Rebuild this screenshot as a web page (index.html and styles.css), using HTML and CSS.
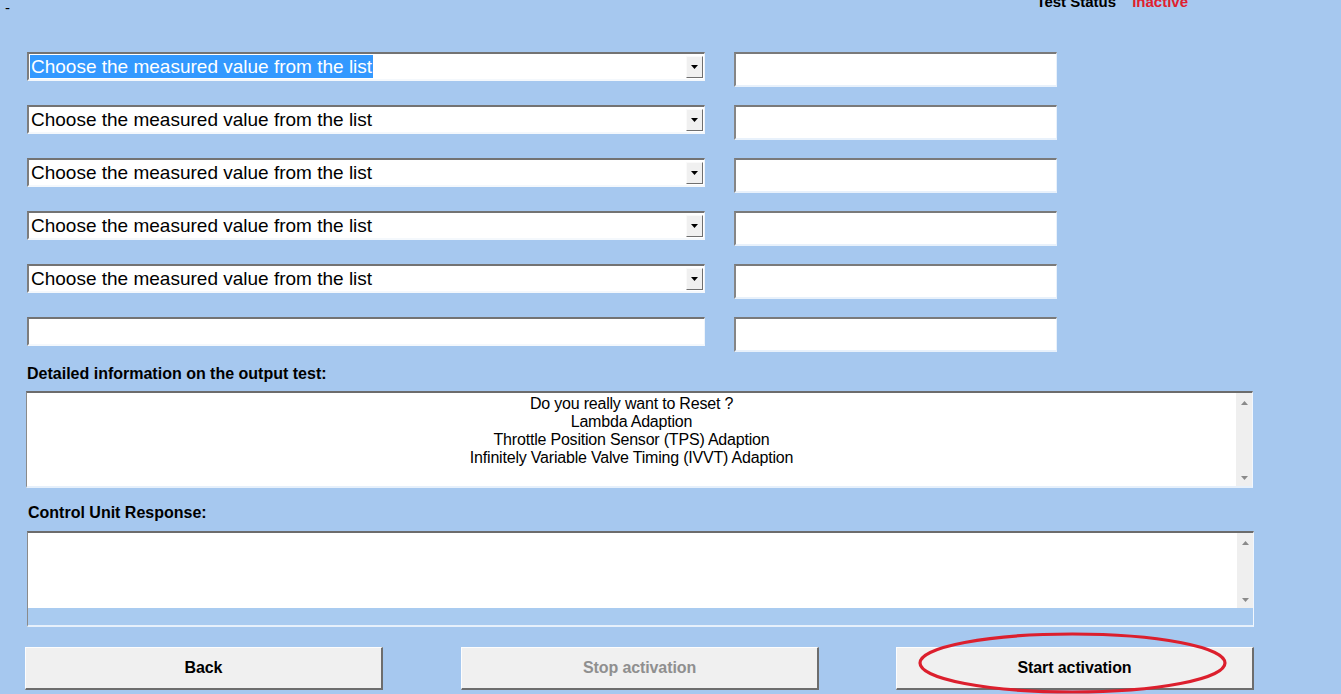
FILE: index.html
```html
<!DOCTYPE html>
<html>
<head>
<meta charset="utf-8">
<link rel="stylesheet" href="styles.css">
</head>
<body>
<div class="topbar">
  <span class="dash">-</span>
  <div class="status"><span class="status-label">Test Status</span><span class="status-value">Inactive</span></div>
</div>

<div class="fields">
  <div class="select"><span class="select-text"><span class="selected">Choose the measured value from the list</span></span><span class="drop"><svg width="7" height="4" viewBox="0 0 7 4"><path d="M0 0H7L3.5 4Z" fill="#000"/></svg></span></div>
  <div class="input"></div>
  <div class="select"><span class="select-text">Choose the measured value from the list</span><span class="drop"><svg width="7" height="4" viewBox="0 0 7 4"><path d="M0 0H7L3.5 4Z" fill="#000"/></svg></span></div>
  <div class="input"></div>
  <div class="select"><span class="select-text">Choose the measured value from the list</span><span class="drop"><svg width="7" height="4" viewBox="0 0 7 4"><path d="M0 0H7L3.5 4Z" fill="#000"/></svg></span></div>
  <div class="input"></div>
  <div class="select"><span class="select-text">Choose the measured value from the list</span><span class="drop"><svg width="7" height="4" viewBox="0 0 7 4"><path d="M0 0H7L3.5 4Z" fill="#000"/></svg></span></div>
  <div class="input"></div>
  <div class="select"><span class="select-text">Choose the measured value from the list</span><span class="drop"><svg width="7" height="4" viewBox="0 0 7 4"><path d="M0 0H7L3.5 4Z" fill="#000"/></svg></span></div>
  <div class="input"></div>
  <div class="select plain"></div>
  <div class="input"></div>
</div>

<div class="label label-info">Detailed information on the output test:</div>
<div class="textbox info">
  <div class="textbox-content">
    <div>Do you really want to Reset ?</div>
    <div>Lambda Adaption</div>
    <div>Throttle Position Sensor (TPS) Adaption</div>
    <div>Infinitely Variable Valve Timing (IVVT) Adaption</div>
  </div>
  <div class="vscroll">
    <svg width="7" height="4" viewBox="0 0 7 4"><path d="M0 4H7L3.5 0Z" fill="#8a8a8a"/></svg>
    <svg width="7" height="4" viewBox="0 0 7 4"><path d="M0 0H7L3.5 4Z" fill="#8a8a8a"/></svg>
  </div>
</div>

<div class="label label-response">Control Unit Response:</div>
<div class="textbox response">
  <div class="response-main">
    <div class="textbox-content"></div>
    <div class="vscroll">
      <svg width="7" height="4" viewBox="0 0 7 4"><path d="M0 4H7L3.5 0Z" fill="#8a8a8a"/></svg>
      <svg width="7" height="4" viewBox="0 0 7 4"><path d="M0 0H7L3.5 4Z" fill="#8a8a8a"/></svg>
    </div>
  </div>
  <div class="hstrip"></div>
</div>

<div class="buttons">
  <div class="btn">Back</div>
  <div class="btn disabled">Stop activation</div>
  <div class="btn start">Start activation
    <svg class="ring" width="311" height="64" viewBox="0 0 311 64"><ellipse cx="155.5" cy="32" rx="152.5" ry="29" fill="none" stroke="#dc1f2d" stroke-width="3.2"/></svg>
  </div>
</div>
</body>
</html>
```

FILE: styles.css
```css
html, body {
  margin: 0;
  padding: 0;
}
body {
  background: #a6c8ef;
  font-family: "Liberation Sans", Arial, sans-serif;
  color: #000;
  width: 1341px;
  height: 694px;
  overflow: hidden;
}
.topbar {
  display: flex;
  justify-content: space-between;
  align-items: flex-start;
  height: 16px;
  padding-left: 5px;
  padding-right: 153px;
}
.dash {
  font-size: 15px;
  line-height: 16px;
}
.status {
  display: flex;
  gap: 16px;
  margin-top: -6px;
  font-size: 15px;
  line-height: 15px;
  font-weight: bold;
}
.status-value {
  color: #e0202e;
}
.fields {
  display: grid;
  grid-template-columns: 678px 323px;
  grid-auto-rows: 35px;
  column-gap: 29px;
  row-gap: 18px;
  margin-top: 36px;
  margin-left: 27px;
}
.select {
  box-sizing: border-box;
  height: 29px;
  margin-top: 0;
  background: #fff;
  border-style: solid;
  border-width: 2px 1px 2px 2px;
  border-color: #737373 #eef4fb #f4f8fc #7d7d7d;
  display: flex;
  align-items: center;
  justify-content: space-between;
  padding: 0 1px 0 1px;
}
.select-text {
  font-size: 19px;
  line-height: 23px;
  white-space: nowrap;
  padding-left: 1px;
}
.selected {
  display: inline-block;
  background: #3399ff;
  color: #fff;
  margin-left: -1px;
  padding-left: 1px;
  padding-right: 1px;
}
.drop {
  box-sizing: border-box;
  width: 17px;
  height: 22px;
  background: #f0f0f0;
  border-style: solid;
  border-width: 1px;
  border-color: #fafafa #6f6f6f #6f6f6f #fafafa;
  display: flex;
  align-items: center;
  justify-content: center;
}
.input {
  box-sizing: border-box;
  height: 35px;
  background: #fff;
  border-style: solid;
  border-width: 2px 1px 2px 2px;
  border-color: #7a7a7a #e8f1fb #e8f1fb #858585;
}
.label {
  font-size: 16px;
  line-height: 18px;
  font-weight: bold;
  white-space: nowrap;
}
.label-info {
  margin-top: 13px;
  margin-left: 27px;
  margin-bottom: 8px;
}
.label-response {
  margin-top: 16px;
  margin-left: 28px;
  margin-bottom: 9px;
}
.textbox {
  box-sizing: border-box;
  background: #fff;
  border-style: solid;
  border-width: 2px 1px 2px 1px;
  border-color: #6c6c6c #f2f7fd #e6f0fb #8a8a8a;
}
.info {
  width: 1227px;
  height: 97px;
  margin-left: 26px;
  display: flex;
}
.textbox-content {
  flex: 1;
  text-align: center;
  font-size: 16px;
  letter-spacing: -0.2px;
  line-height: 18px;
  padding-top: 2px;
}
.vscroll {
  width: 16px;
  background: #efefef;
  display: flex;
  flex-direction: column;
  justify-content: space-between;
  align-items: center;
  padding: 8px 0 6px;
  box-sizing: border-box;
}
.response {
  width: 1227px;
  height: 96px;
  margin-left: 27px;
  display: flex;
  flex-direction: column;
  background: #fff;
}
.response-main {
  display: flex;
  height: 75px;
}
.hstrip {
  flex: 1;
  background: #a9cbf0;
}
.buttons {
  display: flex;
  gap: 78px;
  margin-top: 20px;
  margin-left: 25px;
}
.btn {
  position: relative;
  box-sizing: border-box;
  width: 358px;
  height: 43px;
  background: #f0f0f0;
  border-style: solid;
  border-width: 1px 2px 2px 1px;
  border-color: #fdfdfd #6d6d6d #6d6d6d #fdfdfd;
  display: flex;
  align-items: center;
  justify-content: center;
  font-size: 16px;
  font-weight: bold;
  letter-spacing: -0.1px;
}
.btn.disabled {
  color: #8f8f8f;
}
.btn.start {
  margin-left: -1px;
}
.ring {
  position: absolute;
  left: 20px;
  top: -17px;
}
```
